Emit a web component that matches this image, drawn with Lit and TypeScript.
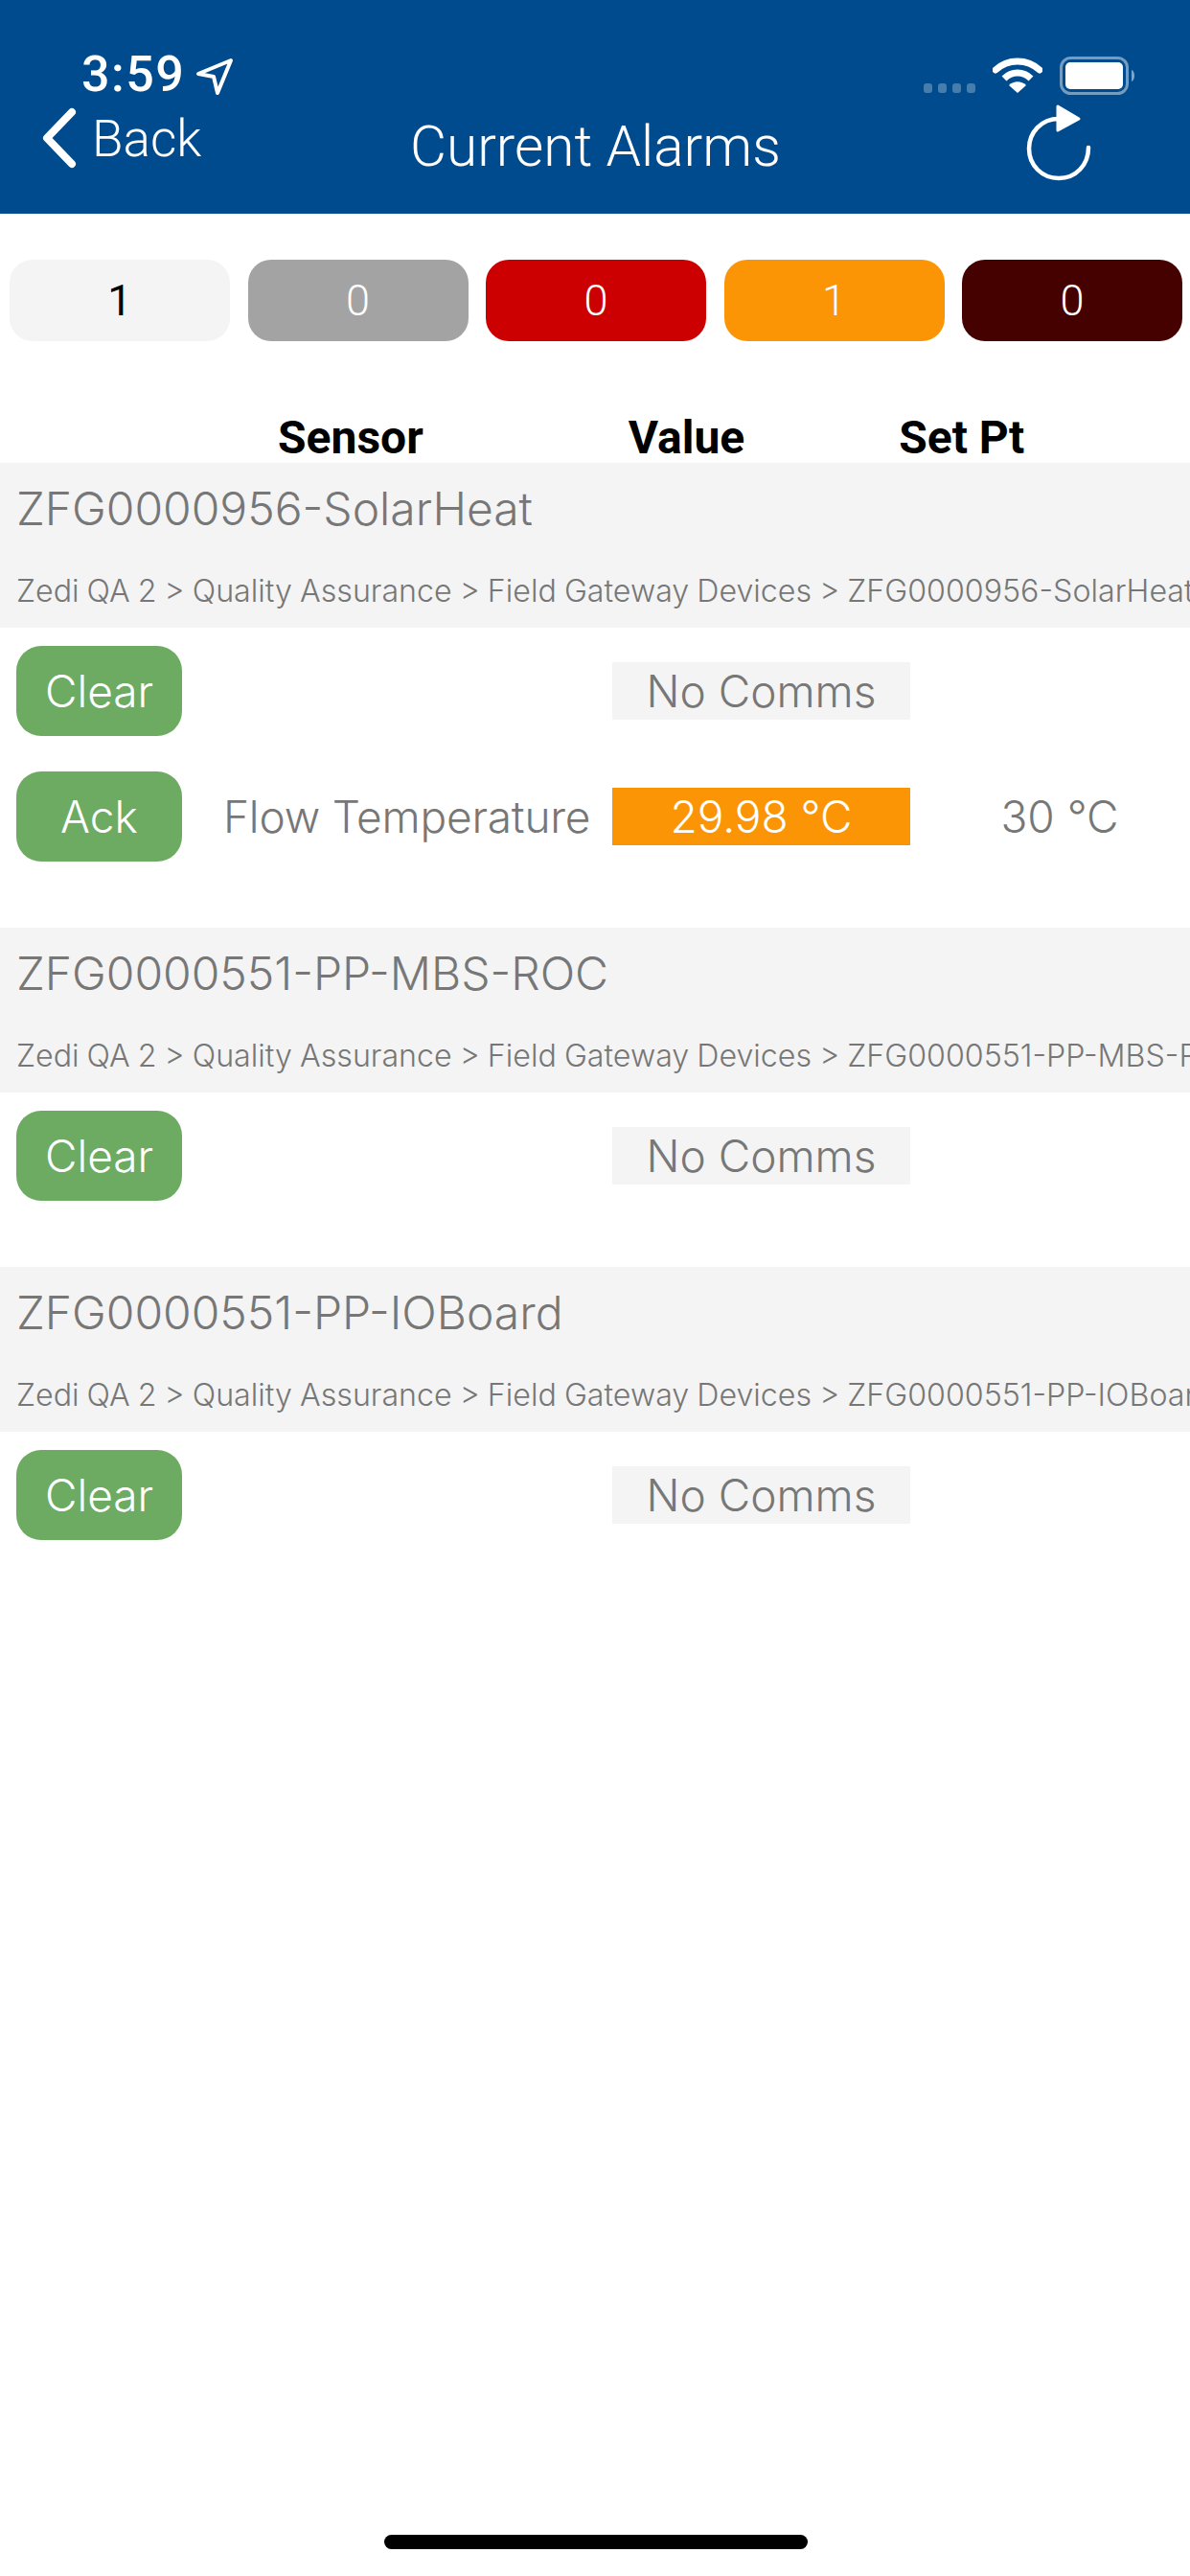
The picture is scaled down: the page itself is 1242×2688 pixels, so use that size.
import { LitElement, html, css } from "lit";
import { customElement } from "lit/decorators.js";

interface Row { action: string; sensor?: string; value: string; alarm?: boolean; setPt?: string }
interface Group { name: string; path: string; rows: Row[] }

const GROUPS: Group[] = [
  {
    name: "ZFG0000956-SolarHeat",
    path: "Zedi QA 2 > Quality Assurance > Field Gateway Devices > ZFG0000956-SolarHeat",
    rows: [
      { action: "Clear", value: "No Comms" },
      { action: "Ack", sensor: "Flow Temperature", value: "29.98 °C", alarm: true, setPt: "30 °C" },
    ],
  },
  {
    name: "ZFG0000551-PP-MBS-ROC",
    path: "Zedi QA 2 > Quality Assurance > Field Gateway Devices > ZFG0000551-PP-MBS-ROC",
    rows: [{ action: "Clear", value: "No Comms" }],
  },
  {
    name: "ZFG0000551-PP-IOBoard",
    path: "Zedi QA 2 > Quality Assurance > Field Gateway Devices > ZFG0000551-PP-IOBoard",
    rows: [{ action: "Clear", value: "No Comms" }],
  },
];

const CHIPS = [
  { n: "1", c: "c-none" },
  { n: "0", c: "c-grey" },
  { n: "0", c: "c-red" },
  { n: "1", c: "c-orange" },
  { n: "0", c: "c-dark" },
];

@customElement("app-root")
export class AppRoot extends LitElement {
  static styles = css`
    :host { display: block; width: 1242px; height: 2688px; background: #fff; position: relative; overflow: hidden; font-family: "Inter", "Liberation Sans", sans-serif; }
    .head { height: 223px; background: #004b8d; color: #fff; font-family: Roboto, sans-serif; box-sizing: border-box; padding-top: 55px; }
    .status { display: flex; align-items: flex-start; height: 46px; padding-left: 85px; padding-right: 56px; }
    .time { font-size: 52px; line-height: 46px; font-weight: 500; letter-spacing: 1.5px; }
    .loc { margin: 5px 0 0 11px; width: 40px; height: 40px; }
    .sp { flex: 1; }
    .dots { display: flex; gap: 6px; margin-top: 32px; margin-right: 18px; }
    .dots i { width: 9px; height: 10px; border-radius: 3px; background: rgba(255,255,255,.28); display: block; }
    .wifi { width: 52px; height: 38px; margin-top: 4px; margin-right: 18px; }
    .batt { width: 80px; height: 40px; margin-top: 4px; }
    .nav { display: grid; grid-template-columns: 428px 386px 1fr; height: 122px; }
    .back { display: flex; align-items: flex-start; padding-left: 43px; }
    .chev { width: 38px; height: 64px; margin-top: 11px; }
    .back span { font-size: 53px; line-height: 60px; font-weight: 300; margin: 14px 0 0 15px; }
    .title { font-size: 58.5px; line-height: 66px; font-weight: 300; text-align: center; white-space: nowrap; margin-top: 19px; }
    .refresh { width: 70px; height: 80px; margin: 8px 0 0 257px; display: block; }

    .chips { display: grid; grid-template-columns: repeat(5, 230px); column-gap: 18.5px; padding: 48px 0 0 10px; }
    .chip { height: 85px; border-radius: 24px; display: flex; align-items: center; justify-content: center; font: 300 45px/1 Roboto, sans-serif; color: #fff; }
    .c-none { background: #f4f4f4; color: #000; font-weight: 400; }
    .c-grey { background: #a3a3a3; }
    .c-red { background: #cc0000; }
    .c-orange { background: #fb9506; }
    .c-dark { background: #450000; }

    .cols { height: 127px; display: flex; align-items: flex-end; font: 700 48px/52px Roboto, sans-serif; color: #000; padding-left: 290px; box-sizing: border-box; }
    .cols span { display: block; }
    .cols .v { margin-left: 214px; }
    .cols .s { margin-left: 161px; }

    .gh { height: 172px; background: #f4f4f4; color: #777; overflow: hidden; padding-left: 17px; box-sizing: border-box; white-space: nowrap; font-weight: 300; }
    .gh .name { font-size: 48px; line-height: 56px; padding-top: 20px; }
    .gh .path { font-size: 32.2px; line-height: 40px; padding-top: 38px; word-spacing: -1px; }
    .body { padding: 19px 0 69px 17px; display: flex; flex-direction: column; gap: 37px; }
    .row { display: grid; grid-template-columns: 173px 449px 311px 1fr; align-items: center; height: 94px; color: #777; font-weight: 300; font-size: 46px; }
    .btn { height: 94px; border-radius: 26px; background: #6dab62; color: #fff; display: flex; align-items: center; justify-content: center; }
    .sensor { padding-left: 43px; white-space: nowrap; letter-spacing: -0.2px; }
    .val { height: 60px; background: #f4f4f4; display: flex; align-items: center; justify-content: center; white-space: nowrap; }
    .val.alarm { background: #fb9506; color: #fff; }
    .sp-val { text-align: center; padding-left: 20px; white-space: nowrap; }
    .homebar { position: absolute; left: 401px; top: 2645px; width: 442px; height: 15px; border-radius: 8px; background: #000; }
  `;

  render() {
    return html`
      <div class="head">
        <div class="status">
          <span class="time">3:59</span>
          <svg class="loc" viewBox="0 0 40 40"><path d="M37 3 L3 17 L19 20 L23 37 Z" fill="none" stroke="#fff" stroke-width="4" stroke-linejoin="round"/></svg>
          <span class="sp"></span>
          <span class="dots"><i></i><i></i><i></i><i></i></span>
          <svg class="wifi" viewBox="0 0 52 38">
            <path d="M3 14 C16 2 36 2 49 14" fill="none" stroke="#fff" stroke-width="7" stroke-linecap="round" stroke-linejoin="round"/>
            <path d="M12 23 C20 15 32 15 40 23" fill="none" stroke="#fff" stroke-width="7"/>
            <path d="M26 38 L17 30 C22 25 30 25 35 30 Z" fill="#fff"/>
          </svg>
          <svg class="batt" viewBox="0 0 80 40">
            <rect x="1.5" y="1.5" width="69" height="37" rx="10" fill="none" stroke="rgba(255,255,255,.45)" stroke-width="3"/>
            <rect x="6" y="6" width="60" height="28" rx="5" fill="#fff"/>
            <path d="M75 14 C79 15 79 25 75 26 Z" fill="rgba(255,255,255,.5)"/>
          </svg>
        </div>
        <div class="nav">
          <div class="back">
            <svg class="chev" viewBox="0 0 38 64"><path d="M32 5 L6 32 L32 59" fill="none" stroke="#fff" stroke-width="8" stroke-linecap="round" stroke-linejoin="round"/></svg>
            <span>Back</span>
          </div>
          <div class="title">Current Alarms</div>
          <svg class="refresh" viewBox="0 0 70 80">
            <path d="M34 15 C16 15 3 29 3 46 C3 64 17 77 34 77 C52 77 65 63 65 45" fill="none" stroke="#fff" stroke-width="4.5" stroke-linecap="round"/>
            <path d="M33 2 L55 15 L33 27 Z" fill="#fff" stroke="#fff" stroke-width="3" stroke-linejoin="round"/>
          </svg>
        </div>
      </div>
      <div class="chips">${CHIPS.map((c) => html`<div class="chip ${c.c}">${c.n}</div>`)}</div>
      <div class="cols"><span>Sensor</span><span class="v">Value</span><span class="s">Set Pt</span></div>
      ${GROUPS.map(
        (g) => html`
          <div class="gh"><div class="name">${g.name}</div><div class="path">${g.path}</div></div>
          <div class="body">
            ${g.rows.map(
              (r) => html`<div class="row">
                <div class="btn">${r.action}</div>
                <div class="sensor">${r.sensor ?? ""}</div>
                <div class="val ${r.alarm ? "alarm" : ""}">${r.value}</div>
                <div class="sp-val">${r.setPt ?? ""}</div>
              </div>`
            )}
          </div>
        `
      )}
      <div class="homebar"></div>
    `;
  }
}
